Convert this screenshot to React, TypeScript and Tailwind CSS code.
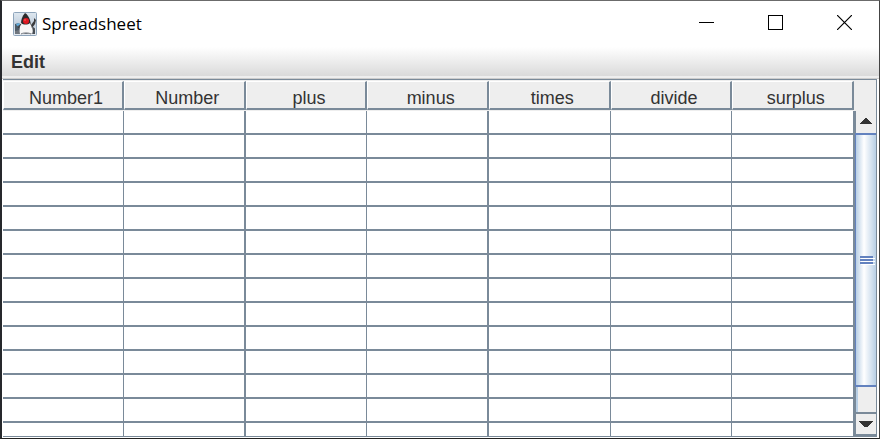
import React from "react";

const columns = ["Number1", "Number", "plus", "minus", "times", "divide", "surplus"];
const rows = Array.from({ length: 14 }, (_, i) => i);

function DukeIcon() {
  return (
    <svg viewBox="0 0 24 24" className="h-6 w-6 shrink-0" aria-hidden="true">
      <defs>
        <linearGradient id="duke-bg" x1="0" y1="0" x2="0" y2="1">
          <stop offset="0" stopColor="#dfe8f0" />
          <stop offset="0.5" stopColor="#c3d0de" />
          <stop offset="1" stopColor="#e6ebf1" />
        </linearGradient>
      </defs>
      <rect x="0.5" y="0.5" width="23" height="23" rx="1" fill="url(#duke-bg)" stroke="#8fa5bb" />
      <path d="M2 16l5-1h12l3 1v6H2z" fill="#70767e" />
      <path d="M2 12l4-1 2 3-2 4-4 1z" fill="#4d5a66" />
      <path d="M3 12l3-1 1 2-3 1z" fill="#62aee0" />
      <path d="M12 1c2 1 4 4 5 7l1 5-5 1-5-2c0-4 1-8 4-11z" fill="#2c2b2c" />
      <path d="M8 11c2 2 7 2 9 0l2 5c1 3 1 5-1 6-2 0-3-1-5-1s-4 2-6 1c-1-3 0-8 1-11z" fill="#f7f7f7" />
      <path d="M8 12l-3 4" fill="none" stroke="#3b3b3d" />
      <path d="M18 13l3-4v-3l2 2-1 4-3 4z" fill="#3b3b3d" />
      <path d="M8 22c2-1 3-1 5-1s3 0 5 1" fill="none" stroke="#6b7077" />
      <path d="M20 15l2 2v5h-2z" fill="#494e54" />
      <circle cx="13" cy="9" r="3" fill="#df1922" />
      <circle cx="12" cy="8" r="1" fill="#f24a4a" />
    </svg>
  );
}

function TitleBar() {
  return (
    <header className="flex h-[46px] shrink-0 items-center bg-white pl-[11px] text-black">
      <DukeIcon />
      <h1 className="ml-[5px] flex-1 font-['Open_Sans',sans-serif] text-[17px] leading-6">Spreadsheet</h1>
      <div className="flex h-full pb-1">
        <button aria-label="Minimize" className="flex w-[69px] items-center justify-center">
          <svg width="15" height="15" shapeRendering="crispEdges">
            <path d="M0 7.5h15" stroke="#000" />
          </svg>
        </button>
        <button aria-label="Maximize" className="flex w-[69px] items-center justify-center">
          <svg width="15" height="15" shapeRendering="crispEdges">
            <rect x="0.5" y="0.5" width="14" height="14" fill="none" stroke="#000" />
          </svg>
        </button>
        <button aria-label="Close" className="flex w-[69px] items-center justify-center">
          <svg width="15" height="15">
            <path d="M0 0l15 15M15 0L0 15" stroke="#000" strokeWidth="1.2" />
          </svg>
        </button>
      </div>
    </header>
  );
}

function Sheet() {
  return (
    <div className="min-w-0 flex-1 overflow-hidden bg-white">
      <table className="w-full table-fixed border-separate border-spacing-0" aria-label="Spreadsheet">
        <thead>
          <tr>
            {columns.map((name) => (
              <th
                key={name}
                scope="col"
                className="h-[31px] border-y border-[#eeeeee] bg-[#eeeeee] p-0 font-normal first:w-[121px]"
              >
                <div className="h-[29px] border-t border-r-2 border-b-2 border-l border-t-white border-r-[#7a8a99] border-b-[#7a8a99] border-l-white pt-1 pl-1.5 text-center text-[18px] leading-6">
                  {name}
                </div>
              </th>
            ))}
          </tr>
        </thead>
        <tbody>
          {rows.map((row) => (
            <tr key={row}>
              {columns.map((name) => (
                <td
                  key={name}
                  className="h-6 border-r border-b-2 border-[#7a8a99] bg-white p-0 nth-2:border-r-2 nth-4:border-r-2"
                />
              ))}
            </tr>
          ))}
        </tbody>
      </table>
    </div>
  );
}

function ScrollBar() {
  return (
    <div className="flex w-[22px] shrink-0 flex-col bg-[#eeeeee]">
      <div className="h-[31px] shrink-0" />
      <div className="flex min-h-0 flex-1 flex-col border-l border-[#7a8a99]">
        <button
          aria-label="Scroll up"
          className="flex h-[22px] shrink-0 items-center justify-center border-l border-[#7a8a99] pb-0.5"
        >
          <svg width="12" height="6" shapeRendering="crispEdges">
            <path d="M5 0h2v1h1v1h1v1h1v1h1v1h1v1H0V5h1V4h1V3h1V2h1V1h1z" fill="#333" />
          </svg>
        </button>
        <div
          role="scrollbar"
          aria-label="Vertical scroll"
          aria-controls="root"
          aria-valuenow={0}
          className="flex min-h-0 flex-1 flex-col"
        >
          <div className="flex basis-[91%] items-center justify-center border-y-2 border-l border-[#6382bf] bg-linear-to-r from-[#b8cfe5] via-white via-40% to-[#b8cfe5] pt-0.5 pl-0.5">
            <svg width="15" height="9" shapeRendering="crispEdges">
              <path d="M1 2.5h14M1 5.5h14M1 8.5h14" stroke="#fff" />
              <path d="M0 1h13M0 4h13M0 7h13" stroke="#6382bf" strokeWidth="2" />
            </svg>
          </div>
          <div className="flex-1 border-l border-[#7a8a99]">
            <div className="h-full border-l-2 border-[#b8cfe5]" />
          </div>
        </div>
        <button
          aria-label="Scroll down"
          className="flex h-6 shrink-0 items-center justify-center border-y-2 border-l border-[#7a8a99]"
        >
          <svg width="14" height="6" shapeRendering="crispEdges">
            <path d="M0 0h14v1h-1v1h-1v1h-1v1h-1v1H9v1H5V5H4V4H3V3H2V2H1V1H0z" fill="#333" />
          </svg>
        </button>
      </div>
    </div>
  );
}

export default function App() {
  return (
    <div className="flex h-screen flex-col border-t border-r border-b border-l-2 border-t-[#6b6b6b] border-r-[#444] border-b-[#222] border-l-[#26282c] bg-white font-['Liberation_Sans',Arial,sans-serif] text-[#333333]">
      <TitleBar />
      <nav className="h-8 shrink-0 border-b border-[#cccccc]">
        <div className="flex h-full items-start border-b-2 border-[#eeeeee] bg-linear-to-b from-white to-[#dadada] pl-2">
          <button className="px-px pt-[3px] text-[18px] leading-6 font-bold">Edit</button>
        </div>
      </nav>
      <main className="mr-0.5 mb-px ml-px flex min-h-0 flex-1 border-y border-r border-[#7a8a99]">
        <Sheet />
        <ScrollBar />
      </main>
    </div>
  );
}
